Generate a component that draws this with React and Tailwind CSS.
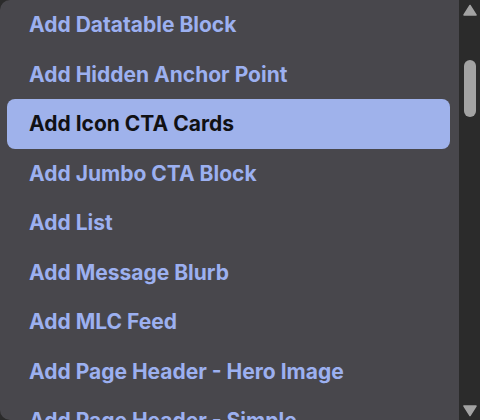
import React from "react";

const items = [
  "Add Datatable Block",
  "Add Hidden Anchor Point",
  "Add Icon CTA Cards",
  "Add Jumbo CTA Block",
  "Add List",
  "Add Message Blurb",
  "Add MLC Feed",
  "Add Page Header - Hero Image",
  "Add Page Header - Simple",
];

export default function App() {
  return (
    <div
      className="w-[480px] h-[420px] overflow-hidden bg-[#2b2b2b] flex"
      style={{ fontFamily: "Inter, 'Noto Sans', sans-serif" }}
    >
      <div className="w-[459px] h-[420px] overflow-hidden bg-[#48474c] rounded-l-[10px] flex flex-col pl-[7px] pr-[9px]">
        {items.map((t, i) => (
          <div
            key={t}
            className={
              "h-[49.5px] shrink-0 flex items-center pl-[22px] rounded-[8px] text-[21px] font-bold whitespace-nowrap " +
              (i === 2 ? "bg-[#9fb2eb] text-[#111114]" : "text-[#9cb0f0]")
            }
          >
            {t}
          </div>
        ))}
      </div>
      <div className="w-[21px] h-[420px] bg-[#2b2b2b] flex flex-col items-center relative">
        <svg width="14" height="12" viewBox="0 0 14 12" className="absolute left-[4px] top-[4px]">
          <path d="M7 1.5 L13 11 L1 11 Z" fill="#a3a3a3" stroke="#a3a3a3" strokeWidth="1.5" strokeLinejoin="round" />
        </svg>
        <div className="absolute left-[5px] top-[60px] w-[12px] h-[57px] rounded-full bg-[#a3a3a3]" />
        <svg width="14" height="12" viewBox="0 0 14 12" className="absolute left-[4px] top-[405px]">
          <path d="M1 1 L13 1 L7 10.5 Z" fill="#a3a3a3" stroke="#a3a3a3" strokeWidth="1.5" strokeLinejoin="round" />
        </svg>
      </div>
    </div>
  );
}
